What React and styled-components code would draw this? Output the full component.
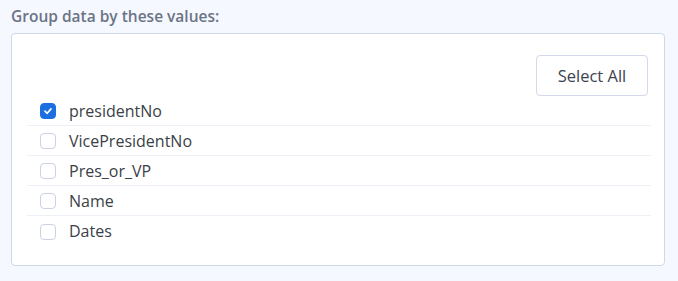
import React, { useState } from 'react';
import styled, { createGlobalStyle } from 'styled-components';

const GlobalStyle = createGlobalStyle`
    html, body {
        margin: 0;
        padding: 0;
        background: #f5f8fe;
        font-family: "Open Sans", "Noto Sans", sans-serif;
    }
`;

const Wrapper = styled.div`
    padding: 5px 13px 0 11px;
    width: 654px;
`;

const Title = styled.div`
    font-size: 15.5px;
    font-weight: 600;
    color: #6b7487;
    height: 28px;
    line-height: 22px;
`;

const Panel = styled.div`
    box-sizing: border-box;
    height: 233px;
    background: #ffffff;
    border: 1px solid #cfd7ec;
    border-radius: 4px;
    padding: 21px 13px 0 15px;
`;

const Toolbar = styled.div`
    display: flex;
    justify-content: flex-end;
    padding-right: 3px;
`;

const Button = styled.button`
    box-sizing: border-box;
    width: 112px;
    height: 41px;
    background: #ffffff;
    border: 1px solid #d3d9e8;
    border-radius: 4px;
    font-family: inherit;
    font-size: 16.5px;
    color: #3d4350;
    cursor: pointer;
`;

const List = styled.div`
    display: flex;
    flex-direction: column;
`;

const Row = styled.label`
    display: flex;
    align-items: center;
    gap: 13px;
    height: 30px;
    box-sizing: border-box;
    padding-left: 13px;
    border-bottom: ${p => (p.last ? 'none' : '1px solid #eef0f7')};
    font-size: 16px;
    color: #3b3f48;
    cursor: pointer;
`;

const Box = styled.span`
    box-sizing: border-box;
    width: 16px;
    height: 16px;
    border-radius: 4px;
    border: 1px solid ${p => (p.checked ? '#1b6fe0' : '#cbd2e2')};
    background: ${p => (p.checked ? '#1b6fe0' : '#ffffff')};
    display: flex;
    align-items: center;
    justify-content: center;
    margin-top: 1px;
`;

const fields = ['presidentNo', 'VicePresidentNo', 'Pres_or_VP', 'Name', 'Dates'];

export default function App() {
    const [checked, setChecked] = useState({ presidentNo: true });

    const toggle = name => setChecked(c => ({ ...c, [name]: !c[name] }));
    const selectAll = () => setChecked(Object.fromEntries(fields.map(f => [f, true])));

    return (
        <Wrapper>
            <GlobalStyle />
            <Title>Group data by these values:</Title>
            <Panel>
                <Toolbar>
                    <Button onClick={selectAll}>Select All</Button>
                </Toolbar>
                <List>
                    {fields.map((f, i) => (
                        <Row key={f} last={i === fields.length - 1} onClick={() => toggle(f)}>
                            <Box checked={!!checked[f]}>
                                {checked[f] && (
                                    <svg width="10" height="10" viewBox="0 0 10 10">
                                        <path d="M2 5.2 L4.2 7.3 L8 2.9" fill="none" stroke="#fff" strokeWidth="1.7" strokeLinecap="round" strokeLinejoin="round" />
                                    </svg>
                                )}
                            </Box>
                            {f}
                        </Row>
                    ))}
                </List>
            </Panel>
        </Wrapper>
    );
}
